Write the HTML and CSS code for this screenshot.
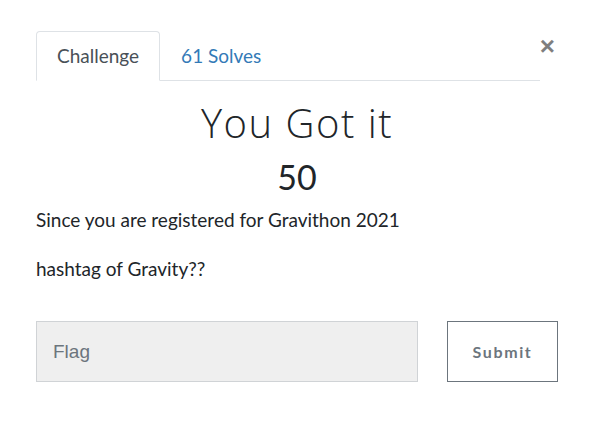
FILE: index.html
```html
<!DOCTYPE html>
<html>
<head>
<meta charset="utf-8">
<link rel="stylesheet" href="styles.css">
</head>
<body>
<div class="modal">
  <div class="header">
    <ul class="tabs">
      <li class="tab active">Challenge</li>
      <li class="tab link">61 Solves</li>
    </ul>
    <button class="close">&times;</button>
  </div>
  <h2 class="title">You Got it</h2>
  <h3 class="value">50</h3>
  <div class="desc">
    <p>Since you are registered for Gravithon 2021</p>
    <p>hashtag of Gravity??</p>
  </div>
  <form class="submit-row">
    <input class="flag" type="text" placeholder="Flag">
    <button class="submit" type="button">Submit</button>
  </form>
</div>
</body>
</html>
```
FILE: styles.css
```css
* { box-sizing: border-box; }
html, body { margin: 0; background: #fff; }
body {
  font-family: Lato, "Liberation Sans", sans-serif;
  color: #212529;
  width: 594px;
  height: 437px;
  overflow: hidden;
}
.modal {
  padding: 31px 36px 0 36px;
}
.header {
  display: flex;
  align-items: flex-start;
}
.tabs {
  list-style: none;
  margin: 0;
  padding: 0;
  display: flex;
  width: 505px;
  border-bottom: 1px solid #dee2e6;
}
.tab {
  font-size: 19px;
  line-height: 27px;
  padding: 10px 20px 11px 20px;
  border: 1px solid transparent;
  border-top-left-radius: 4px;
  border-top-right-radius: 4px;
  margin-bottom: -1px;
}
.tab.active {
  color: #495057;
  border-color: #dee2e6 #dee2e6 #fff;
  background: #fff;
}
.tab.link { color: #337ab7; }
.close {
  margin-left: auto;
  margin-top: 1px;
  background: none;
  border: 0;
  padding: 0 3px 0 0;
  font-family: "Liberation Sans", Arial, sans-serif;
  font-size: 26px;
  font-weight: 700;
  line-height: 28px;
  color: #000;
  opacity: .5;
}
.title {
  margin: 18px 0 0 0;
  text-align: center;
  font-family: "Open Sans", sans-serif;
  font-weight: 300;
  font-size: 40px;
  line-height: 48px;
  letter-spacing: 1.5px;
}
.value {
  margin: 9px 0 0 0;
  text-align: center;
  font-weight: 400;
  font-size: 34px;
  line-height: 42px;
}
.desc { margin-top: 8px; }
.desc p {
  margin: 0 0 21px 0;
  font-size: 19px;
  line-height: 28px;
}
.submit-row {
  display: flex;
  gap: 29px;
  margin-top: 38px;
}
.flag {
  width: 382px;
  height: 61px;
  background: #efefef;
  border: 1px solid #d0d3d6;
  padding: 0 16px;
  font-family: "Liberation Sans", Arial, sans-serif;
  font-size: 19px;
  color: #495057;
}
.flag::placeholder { color: #6c757d; }
.submit {
  flex: 1;
  height: 61px;
  background: #fff;
  border: 1px solid #6c757d;
  font-family: Lato, sans-serif;
  font-weight: 700;
  font-size: 16px;
  letter-spacing: 1.6px;
  color: #6c757d;
}
```
